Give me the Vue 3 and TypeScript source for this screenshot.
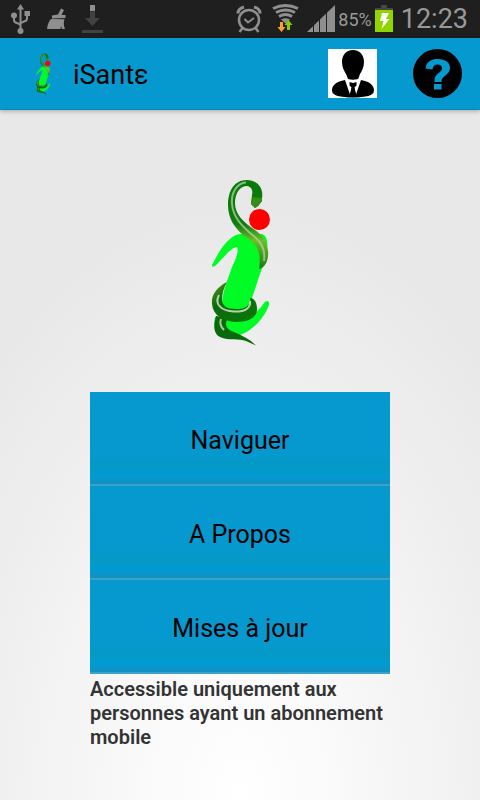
<script setup lang="ts">
interface MenuEntry {
  id: string
  label: string
}

const title = 'iSantε'
const battery = '85%'
const time = '12:23'
const entries: MenuEntry[] = [
  { id: 'browse', label: 'Naviguer' },
  { id: 'about', label: 'A Propos' },
  { id: 'updates', label: 'Mises à jour' },
]
</script>

<template>
  <div class="screen">
    <div class="status">
      <div class="status-left">
        <svg width="20" height="32" viewBox="10 3 20 32" fill="none" stroke="#8f8f8f" stroke-width="2">
          <path d="M20.500 8V30M14 16v4q0 2.500 3 3l3.500 1.500M27 14v4.500q0 2.500-3 3l-3.500 1.500" />
          <path d="M20.500 4l3.500 5.500h-7z M24.500 11h5.500v5h-5.500z" fill="#8f8f8f" stroke="none" />
          <circle cx="14" cy="15.500" r="3" fill="#8f8f8f" stroke="none" />
          <circle cx="20.500" cy="31" r="3" fill="#8f8f8f" stroke="none" />
        </svg>
        <svg width="20" height="32" viewBox="46 3 20 32" fill="#8f8f8f">
          <path d="M61 8.500l3 1.500-2.500 5h4v3L52 18.500v-3l6-1z" />
          <path d="M51 19l13.500.3c-1 3-1 6.500.5 9.700h-3l-1-3-.5 3H47c.5-4 1.500-7.500 4-10z" />
        </svg>
        <svg width="21" height="32" viewBox="82 3 21 32" fill="#424242">
          <path d="M90 5h5v6h-5z" fill="#8f8f8f" />
          <path d="M90 11.500h5V18h5l-7.500 8-7.500-8h5z M82 30h21v3H82z" />
        </svg>
      </div>
      <div class="status-right">
        <svg width="28" height="32" viewBox="235 3 28 32" fill="none" stroke="#8f8f8f">
          <circle cx="249" cy="20" r="10" stroke-width="2.500" />
          <path d="M244.500 19l3.500 3.500 6-4.500" stroke-width="2" />
          <path d="M238 13.500q0-5 6-6.500M260 13.500q0-5-6-6.500" stroke-width="3" />
          <path d="M242.500 28l-3 4M255.500 28l3 4" stroke-width="2.500" />
        </svg>
        <svg width="28" height="32" viewBox="271 3 28 32" fill="none" stroke="#8f8f8f" stroke-width="3">
          <path d="M273 8.500q12.500-6 25 0M276 12.500q9.500-5 19 0M279 16.500q6.500-4 13 0" />
          <path d="M281 19.500q4.500-2.500 9 0l-4.500 4z" fill="#8f8f8f" stroke="none" />
          <path d="M280 22h3v5h2.500l-4 5-4-5h2.500z" fill="#ff9e2c" stroke="none" />
          <path d="M287 30h3v-5h2.500l-4-5-4 5h2.500z" fill="#86cd00" stroke="none" />
        </svg>
        <div class="status-power">
          <svg width="28" height="32" viewBox="307 3 28 32">
            <path d="M307 32L335 5v27z" fill="#8f8f8f" />
            <path d="M313.500 8v24M319.500 8v24M326.500 8v24" stroke="#1f1f1f" stroke-width="1" />
          </svg>
          <span class="percent">{{ battery }}</span>
          <svg width="18" height="32" viewBox="375 3 18 32">
            <path d="M381 5h6v3h6v3h-18V8h6z" fill="#464646" />
            <path d="M375 10h18v22h-18z" fill="#91d500" />
            <path d="M382 13h7l-3 6h3.500l-8 10 2-8H380z" fill="#fff" />
          </svg>
        </div>
        <span class="clock">{{ time }}</span>
      </div>
    </div>

    <header class="bar">
      <svg class="bar-logo" viewBox="209 178 62 170" aria-hidden="true"><use href="#logo" /></svg>
      <h1 class="title">{{ title }}</h1>
      <button class="action" type="button" aria-label="Profil">
        <svg width="49" height="49" viewBox="0 0 49 49">
          <path d="M0 0h49v49H0z" fill="#fff" />
          <path d="M25 1c7 0 11 5 11 12 0 5-2 9-4 12-1 2-1 4-2 5q-5 1.500-10 0c-1-2-1-3-2-5-2-3-4-7-4-12C14 6 18 1 25 1z" />
          <path d="M17 31L22 45.500l1.500-7-2-2v-3.500l3.500 1 3.500-1v3.500l-2 2 1.500 7L33 31c8.500 1.500 13 5 13 10.500 0 5-8 7-21 7S4 46.500 4 41.500C4 36 8.500 32.500 17 31z" />
          <path d="M24 38.500h2l2 7-3 3-3-3z" />
        </svg>
      </button>
      <button class="action" type="button" aria-label="Aide">
        <svg width="49" height="49" viewBox="0 0 49 49">
          <circle cx="24.500" cy="24.500" r="24.500" />
          <path d="M12.500 19.500C13.500 12.500 18 10 25 10c7.500 0 12 3.500 12 9 0 7-8.500 7.500-8.500 13.500v.5h-7v-2c0-6.500 7.500-7.500 7.500-11.500 0-2.500-1.500-4-4.500-4s-4.500 1.500-5 5z M21 35h7.500v5.500H21z" fill="#0599cf" />
        </svg>
      </button>
    </header>

    <main class="content">
      <svg class="logo" viewBox="209 178 62 170" role="img" aria-label="Logo">
        <defs>
          <linearGradient id="neck" x1="0" y1="0" x2="0" y2="1">
            <stop offset="0" stop-color="#087a08" />
            <stop offset=".5" stop-color="#117c10" />
            <stop offset=".68" stop-color="#6fbd28" />
            <stop offset="1" stop-color="#1c7a14" />
          </linearGradient>
          <linearGradient id="coil" x1="0" y1="0" x2="1" y2="1">
            <stop offset="0" stop-color="#5a9a20" />
            <stop offset=".35" stop-color="#0a690b" />
            <stop offset="1" stop-color="#087a08" />
          </linearGradient>
        </defs>
        <g id="logo">
          <path d="M212 265C217 256 222 245 231 238C236 234 241 233 247 235L262 234C267 236 268 242 267 250C266 260 263 266 260 274L250 304C246 313 226 314 222 304C222 293 228 279 232 267C236 259 239 251 237 247C231 247 222 260 215 266C213 267 212 267 212 265Z" fill="#00fb25" />
          <path d="M215 317C213 329 215 333 222 336L240 335C252 331 264 319 269 305C270 300 266 300 264 303C258 312 250 318 242 319Z" fill="#00fb25" />
          <path d="M216 316C213 327 214 334 220 337C229 341 239 338 246 341L256 345.500C250 339 241 335 234 332C228 330 223 326 228 318Z" fill="#0a690b" />
          <path d="M221 319c-2 5 0 8 3 11" fill="none" stroke="#a9c99d" stroke-width="2" />
          <path d="M227 282C217 287 211 295 212 304C213 315 222 321 236 322C250 322 257 317 257 309C257 302 254 298 250 298C251 305 246 309 236 309C227 309 222 306 222 299C222 293 224 288 227 282Z" fill="url(#coil)" />
          <path d="M219 295C214 304 221 311 234 311.500C245 312 251 308 250 301" fill="none" stroke="#b9cfb0" stroke-width="2" />
          <path d="M262 198C264 187 256 180 247 180C234 180 228 191 228 205C228 219 235 228 243 235C255 243 262 249 259 269C265 268 269 260 268 251C267 241 262 235 255 230C243 222 235 214 235 203C235 193 240 186 247 186C252 187 253 191 252 195L251 204L255 208L258 206L262 201Z" fill="url(#neck)" />
          <path d="M246 182.500C237 183 231 193 232 204C233 217 242 226 250 233C258 239 266 246 264 261" fill="none" stroke="#b2d3a2" stroke-opacity=".75" stroke-width="2" />
          <path d="M252 197l10 1v3l-4 5-3 2-4-4z" fill="#368d18" />
          <circle cx="259.500" cy="219.500" r="10.500" fill="#f00" />
        </g>
      </svg>

      <nav class="menu">
        <button v-for="entry in entries" :key="entry.id" class="entry" type="button">{{ entry.label }}</button>
        <p class="note">Accessible uniquement aux personnes ayant un abonnement mobile</p>
      </nav>
    </main>
  </div>
</template>

<style>
body {
  margin: 0;
}
</style>

<style scoped>
.screen {
  display: flex;
  flex-direction: column;
  min-height: 100vh;
  font-family: Roboto, "Noto Sans", sans-serif;
  color: #000;
  background: radial-gradient(ellipse 360px 600px at 50% 100%, #ffffff, #fafafa 25%, #e8e8e8);
}

svg {
  display: block;
  flex: none;
}

.status {
  display: flex;
  justify-content: space-between;
  align-items: center;
  height: 38px;
  padding: 0 12px 0 10px;
  box-sizing: border-box;
  background: #1f1f1f;
  color: #999;
}

.status-left {
  display: flex;
  gap: 16px;
}

.status-right {
  display: flex;
  align-items: center;
  gap: 8px;
}

.status-power {
  display: flex;
  align-items: center;
  gap: 3px;
}

.percent {
  font-size: 18px;
}

.clock {
  font-size: 27px;
  line-height: 38px;
}

.bar {
  display: flex;
  align-items: center;
  height: 72px;
  padding: 0 18px 0 34px;
  box-sizing: border-box;
  background: #0599cf;
  border-bottom: 1px solid #0b86b4;
  box-shadow: 0 1px 5px rgba(0, 0, 0, 0.3);
}

.bar-logo {
  width: 18px;
  height: 42px;
}

.title {
  flex: 1;
  margin: 0;
  padding: 2px 0 0 21px;
  font-size: 27px;
  font-weight: 400;
}

.action {
  margin-left: 36px;
  padding: 0;
  border: 0;
  background: none;
}

.content {
  display: flex;
  flex-direction: column;
  align-items: center;
  gap: 44px;
  padding: 68px 16px 16px;
}

.logo {
  width: 62px;
  height: 170px;
}

.menu {
  width: 100%;
  max-width: 300px;
}

.entry {
  display: block;
  width: 100%;
  height: 94px;
  padding: 4px 0 0;
  border: 0;
  border-bottom: 2px solid #39a3cb;
  font-family: inherit;
  font-size: 25px;
  color: #000;
  background: linear-gradient(#0599cf 0, #0599cf 62px, #0599c6 76px, #009bd5 84px, #158fbd 92px);
}

.note {
  margin: 0;
  padding-top: 3px;
  font-size: 20px;
  font-weight: 600;
  line-height: 24px;
  color: #333;
}
</style>
